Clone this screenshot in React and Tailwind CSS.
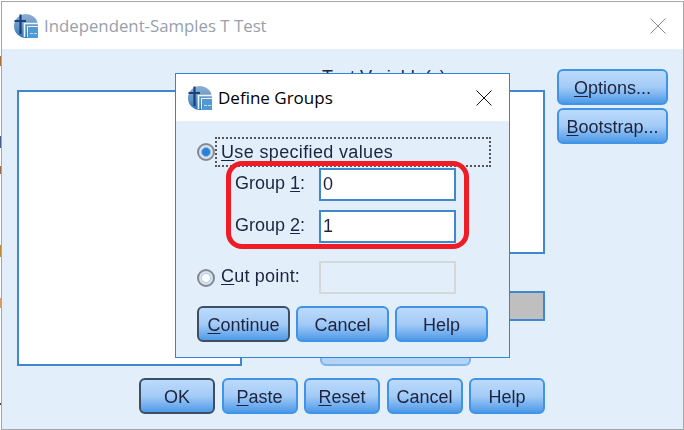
const font = { fontFamily: '"Liberation Sans", Arial, sans-serif' };

function AppIcon({ className, id }) {
  return (
    <svg viewBox="0 0 24 24" className={className}>
      <defs>
        <linearGradient id={id} x1="0" y1="0" x2="0" y2="1">
          <stop offset="0" stopColor="#8fb0d2" />
          <stop offset="0.55" stopColor="#5f95c6" />
          <stop offset="1" stopColor="#2b76b6" />
        </linearGradient>
      </defs>
      <circle cx="12" cy="12" r="12" fill={"url(#" + id + ")"} />
      <path d="M6.5 0.5V20M0.5 7H12" stroke="#1d3f7c" strokeWidth="2.2" fill="none" />
      <path d="M10.5 23V9.5H24" stroke="#eef5fb" strokeWidth="1.6" fill="none" />
      <path d="M13.5 23V12.5H24" stroke="#eef5fb" strokeWidth="1" fill="none" />
      <path d="M14.5 14H24V24H14.5z" fill="#4f9ad4" />
      <path d="M16 19.5h3M20 19.5h3" stroke="#bcdcf2" strokeWidth="1" />
    </svg>
  );
}

function X({ className, color }) {
  return (
    <svg viewBox="0 0 16 16" className={className}>
      <path d="M0.5 0.5L15.5 15.5M15.5 0.5L0.5 15.5" stroke={color} strokeWidth="1" fill="none" />
    </svg>
  );
}

function Btn({ children, className = "", isDefault = false }) {
  return (
    <div
      className={
        "h-9 pt-[2px] flex items-center justify-center rounded-[6px] border-2 bg-gradient-to-b from-[#bcdafc] via-[#a3cbf6] to-[#4d9ae8] text-[18px] text-[#1c2440] shrink-0 " +
        (isDefault ? "border-[#3d4f63] " : "border-[#3f94e6] ") +
        className
      }
      style={font}
    >
      <span className="blur-[0.4px]">{children}</span>
    </div>
  );
}

function U({ children }) {
  return <span className="underline underline-offset-2">{children}</span>;
}

function Radio({ checked }) {
  return (
    <div className="w-[18px] h-[18px] rounded-full border-2 border-[#85898e] bg-[#d5e3f2] flex items-center justify-center shrink-0">
      <div className={"w-[10px] h-[10px] rounded-full " + (checked ? "bg-[#2a7fd8] border border-[#8fbdec]" : "bg-white border border-[#a9cdef]")} />
    </div>
  );
}

function GroupRow({ label, num, value }) {
  return (
    <div className="flex items-center h-[33px]">
      <div className="w-[84px] text-[18px] text-[#1c2440] blur-[0.4px] -mt-[3px]" style={font}>
        {label} <U>{num}</U>:
      </div>
      <div className="w-[137px] h-[33px] bg-white border-2 border-[#3f88cf] flex items-center pl-[2px] text-[18px] text-[#1c2440]" style={font}>
        <span className="blur-[0.4px]">{value}</span>
      </div>
    </div>
  );
}

function DefineGroups() {
  return (
    <div className="absolute left-[175px] top-[73px] w-[335px] h-[285px] border border-[#2e86d8] bg-[#e3eefb] flex flex-col">
      <div className="h-[47px] bg-white flex items-center pl-3 pr-[17px] shrink-0">
        <AppIcon id="ball2" className="w-6 h-6 shrink-0" />
        <span className="ml-[6px] text-[17px] text-black grow" style={{ fontFamily: '"Open Sans", sans-serif' }}>Define Groups</span>
        <X className="w-4 h-4" color="#111" />
      </div>
      <div className="relative flex flex-col pl-[21px] pt-[16px]">
        <div className="flex items-center h-[30px]">
          <Radio checked />
          <div className="w-[276px] h-[30px] border-2 border-dotted border-[#555] flex items-center pl-1 text-[18px] tracking-[0.35px] text-[#1c2440]" style={font}>
            <span className="blur-[0.4px]"><U>U</U>se specified values</span>
          </div>
        </div>
        <div className="ml-[38px] mt-[1px] flex flex-col gap-[9px] w-[221px]">
          <GroupRow label="Group" num="1" value="0" />
          <GroupRow label="Group" num="2" value="1" />
        </div>
        <div className="flex items-center h-[33px] mt-[18px]">
          <Radio />
          <div className="ml-[6px] w-[98px] text-[18px] tracking-[0.2px] text-[#1c2440] blur-[0.4px] -mt-[3px]" style={font}><U>C</U>ut point:</div>
          <div className="w-[137px] h-[33px] border-2 border-[#d5d8da] bg-[#e3eefb]" />
        </div>
        <div className="flex gap-[6px] mt-[12px]">
          <Btn isDefault className="w-[93px]"><U>C</U>ontinue</Btn>
          <Btn className="w-[93px]">Cancel</Btn>
          <Btn className="w-[93px]">Help</Btn>
        </div>
        <div className="absolute left-[50px] top-[40px] w-[243px] h-[88px] border-[5px] border-[#ee1c25] rounded-[16px]" />
      </div>
    </div>
  );
}

export default function App() {
  return (
    <div className="relative w-[684px] h-[430px] bg-white overflow-hidden" style={font}>
      <div className="absolute left-0 top-[56px] w-[1px] h-[10px] bg-[#b0703a]" />
      <div className="absolute left-0 top-[136px] w-[1px] h-[12px] bg-[#4a5a90]" />
      <div className="absolute left-0 top-[166px] w-[1px] h-[8px] bg-[#a06a4a]" />
      <div className="absolute left-0 top-[245px] w-[1px] h-[12px] bg-[#c08a3a]" />
      <div className="absolute left-0 top-[298px] w-[1px] h-[10px] bg-[#d8a060]" />
      <div className="absolute left-0 top-[403px] w-[1px] h-[2px] bg-[#444]" />
      <div className="ml-px mt-px w-[683px] h-[429px] border border-[#a6a6a6] flex flex-col">
        <div className="h-[47px] bg-white flex items-center pl-[12px] pr-[17px] shrink-0">
          <AppIcon id="ball1" className="w-6 h-6 shrink-0" />
          <span className="ml-[6px] text-[16.8px] text-[#97a0ab] grow" style={{ fontFamily: '"Open Sans", sans-serif' }}>Independent-Samples T Test</span>
          <X className="w-4 h-4" color="#8a8a8a" />
        </div>
        <div className="grow bg-[#e3eefb] flex flex-col pl-[15px] pt-[21px]">
          <div className="flex h-[308px]">
            <div className="w-[225px] h-[276px] mt-[20px] bg-white border-2 border-[#3f88cf] shrink-0" />
            <div className="w-[301px] ml-[2px] mr-[12px] flex flex-col shrink-0 items-end">
              <div className="w-full h-[20px] text-[18px] pl-[78px] text-[#1c2440] leading-[20px] -translate-y-[3px]">Test Variable(s):</div>
              <div className="w-[224px] h-[164px] bg-white border-2 border-[#3f88cf]" />
              <div className="mt-[37px] w-[224px] h-[30px] bg-[#bfbfbf] border-2 border-[#3f88cf]" />
              <div className="mt-[14px] w-[151px] h-[31px] mr-[74px] border-2 border-[#7db4ea] rounded-[6px] bg-[#b4d4f5]" />
            </div>
            <div className="flex flex-col gap-[3px] shrink-0 -mt-px">
              <Btn className="w-[111px]"><U>O</U>ptions...</Btn>
              <Btn className="w-[111px]"><U>B</U>ootstrap...</Btn>
            </div>
          </div>
          <div className="flex gap-[6.5px] ml-[122px]">
            <Btn isDefault className="w-[76px]">OK</Btn>
            <Btn className="w-[76px]"><U>P</U>aste</Btn>
            <Btn className="w-[76px]"><U>R</U>eset</Btn>
            <Btn className="w-[76px]">Cancel</Btn>
            <Btn className="w-[76px]">Help</Btn>
          </div>
        </div>
      </div>
      <DefineGroups />
    </div>
  );
}
